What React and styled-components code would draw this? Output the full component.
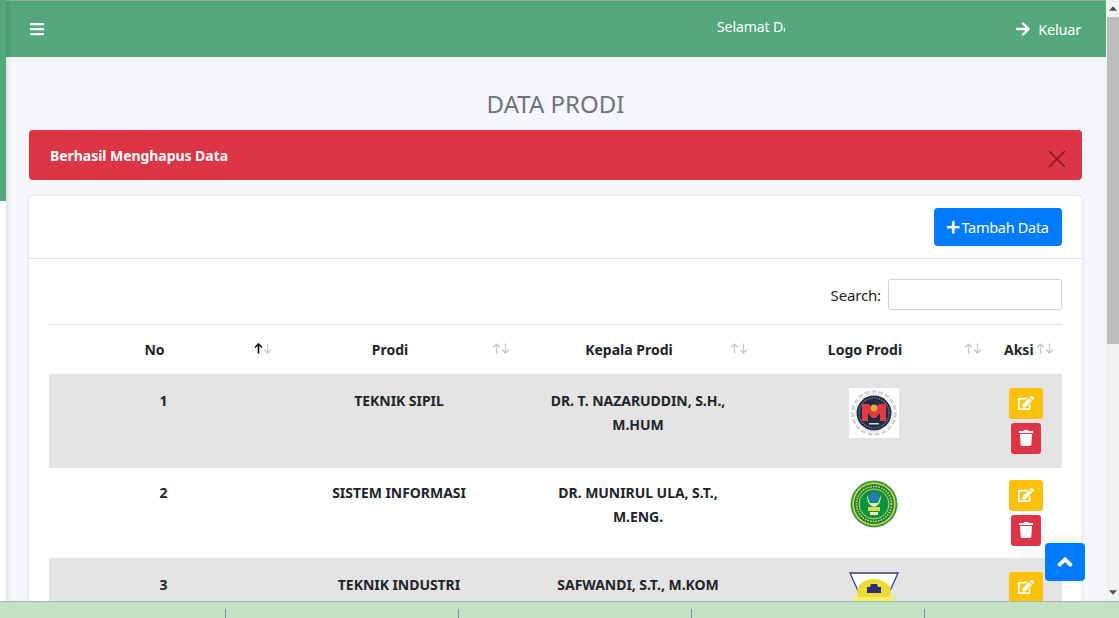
import React from "react";
import styled, { createGlobalStyle } from "styled-components";
import { FaBars, FaArrowRight, FaPlus, FaEdit, FaTrash, FaAngleUp } from "react-icons/fa";

const GlobalStyle = createGlobalStyle`
    html, body {
        margin: 0;
        height: 100%;
        overflow: hidden;
    }
    body {
        font-family: "Noto Sans", "Lato", sans-serif;
        color: #212529;
        background: #fff;
    }
    * {
        box-sizing: border-box;
    }
`;

function LogoTeknikSipil() {
    return (
        <svg width="50" height="50" viewBox="0 0 50 50">
            <rect width="50" height="50" fill="#fff" />
            <circle cx="25" cy="25" r="21.5" fill="none" stroke="#d2d3d6" strokeWidth="2.5" strokeDasharray="5 2" />
            <circle cx="25" cy="25" r="19" fill="#fff" stroke="#c9cacd" strokeWidth="0.6" />
            <circle cx="25" cy="25" r="17.5" fill="#1f2a44" />
            <circle cx="25" cy="25" r="15" fill="none" stroke="#6d7486" strokeWidth="1.5" strokeDasharray="1.5 1" />
            <path d="M13 16h7l5 7 5-7h7v17h-6V25l-4 5h-4l-4-5v8h-6z" fill="#e0393f" />
            <circle cx="25" cy="20" r="3.4" fill="#d9ac3c" />
            <rect x="20" y="35" width="10" height="1.5" fill="#d9dbe2" />
        </svg>
    );
}

function LogoSistemInformasi() {
    return (
        <svg width="50" height="50" viewBox="0 0 50 50">
            <circle cx="25" cy="24" r="23.5" fill="#3e9a45" />
            <circle cx="25" cy="24" r="21.5" fill="#d9d935" />
            <circle cx="25" cy="24" r="20" fill="#1a7f3c" />
            <circle cx="25" cy="24" r="17.5" fill="none" stroke="#cfe08a" strokeWidth="1.6" strokeDasharray="1.5 1.2" />
            <circle cx="25" cy="24" r="15" fill="#0a9440" stroke="#d8e04a" strokeWidth="1" />
            <circle cx="25" cy="17" r="5" fill="#2d76bd" />
            <path d="M18 15c0 8 3 11 7 12 4-1 7-4 7-12l-3 8h-8z" fill="#d9ecd0" />
            <rect x="19" y="27" width="12" height="4" fill="#e2d84a" />
            <rect x="21" y="32" width="8" height="3" fill="#e8eccb" />
        </svg>
    );
}

function LogoTeknikIndustri() {
    return (
        <svg width="50" height="50" viewBox="0 0 50 50">
            <path d="M1 1h48L36 30H14z" fill="#fff" stroke="#3d3a85" strokeWidth="1.3" />
            <ellipse cx="25" cy="20" rx="17" ry="13" fill="#ecdc35" />
            <path d="M18 15h3l1-3h6l1 3h3v6H18z" fill="#2d2a78" />
            <rect x="4" y="25" width="42" height="8" fill="#f5f06a" />
        </svg>
    );
}

const rows = [
    { no: 1, prodi: "TEKNIK SIPIL", kepala: "DR. T. NAZARUDDIN, S.H., M.HUM", logo: <LogoTeknikSipil /> },
    { no: 2, prodi: "SISTEM INFORMASI", kepala: "DR. MUNIRUL ULA, S.T., M.ENG.", logo: <LogoSistemInformasi /> },
    { no: 3, prodi: "TEKNIK INDUSTRI", kepala: "SAFWANDI, S.T., M.KOM", logo: <LogoTeknikIndustri /> },
];

const columns = [
    { label: "No", sortRight: 6, active: true },
    { label: "Prodi", sortRight: 10 },
    { label: "Kepala Prodi", sortRight: 8 },
    { label: "Logo Prodi", sortRight: 10 },
    { label: "Aksi", sortRight: 8 },
];

function SortIcons({ active, right }) {
    return (
        <SortWrap $right={right}>
            <SortArrow viewBox="0 0 9 11" $on={active}><path d="M4.5 10.5V1M1 4.5l3.5-3.5L8 4.5" /></SortArrow>
            <SortArrow viewBox="0 0 9 11"><path d="M4.5.5V10M1 6.500l3.500 3.500L8 6.500" /></SortArrow>
        </SortWrap>
    );
}

export default function App() {
    return (
        <>
            <GlobalStyle />
            <Page>
                <SideStrip />
                <Main>
                    <Header>
                        <MenuButton><FaBars /></MenuButton>
                        <Marquee><MarqueeText>Selamat Datang</MarqueeText></Marquee>
                        <Logout><FaArrowRight />Keluar</Logout>
                    </Header>
                    <Content>
                        <Title>DATA PRODI</Title>
                        <Alert>
                            <strong>Berhasil Menghapus Data</strong>
                            <CloseIcon viewBox="0 0 18 18">
                                <path d="M1 1l16 16M17 1L1 17" />
                            </CloseIcon>
                        </Alert>
                        <Card>
                            <CardHeader>
                                <AddButton><FaPlus />Tambah Data</AddButton>
                            </CardHeader>
                            <CardBody>
                                <SearchRow>
                                    <label htmlFor="cari">Search:</label>
                                    <SearchInput id="cari" type="search" />
                                </SearchRow>
                                <Table>
                                    <colgroup>
                                        <col style={{ width: 229 }} />
                                        <col style={{ width: 242 }} />
                                        <col style={{ width: 236 }} />
                                        <col style={{ width: 236 }} />
                                        <col style={{ width: 70 }} />
                                    </colgroup>
                                    <thead>
                                        <tr>
                                            {columns.map((c) => (
                                                <Th key={c.label}>
                                                    {c.label}
                                                    <SortIcons active={c.active} right={c.sortRight} />
                                                </Th>
                                            ))}
                                        </tr>
                                    </thead>
                                    <tbody>
                                        {rows.map((r) => (
                                            <Row key={r.no} $striped={r.no % 2 === 1}>
                                                <Td>{r.no}</Td>
                                                <Td>{r.prodi}</Td>
                                                <Td>{r.kepala}</Td>
                                                <LogoCell><LogoBox>{r.logo}</LogoBox></LogoCell>
                                                <ActionCell>
                                                    <EditButton><FaEdit /></EditButton>
                                                    <DeleteButton><FaTrash /></DeleteButton>
                                                </ActionCell>
                                            </Row>
                                        ))}
                                    </tbody>
                                </Table>
                            </CardBody>
                        </Card>
                    </Content>
                    <BackToTop><FaAngleUp /></BackToTop>
                </Main>
                <Scrollbar>
                    <ScrollArrow viewBox="0 0 9 5"><path d="M4.5 0L9 5H0z" /></ScrollArrow>
                    <ScrollThumb />
                    <ScrollSpacer />
                    <ScrollArrow viewBox="0 0 9 5"><path d="M0 0h9L4.5 5z" /></ScrollArrow>
                </Scrollbar>
                <BottomBar>
                    <BottomCell $width={226} />
                    <BottomCell $width={233} />
                    <BottomCell $width={233} />
                    <BottomCell $width={233} />
                    <BottomCell $width={194} />
                </BottomBar>
            </Page>
        </>
    );
}

const Page = styled.div`
    position: relative;
    display: grid;
    grid-template-columns: 6px 1fr 13px;
    height: 100vh;
    overflow: hidden;
    background: #fff;
`;

const SideStrip = styled.div`
    height: 201px;
    background: #55a77d;
`;

const Main = styled.main`
    position: relative;
    min-width: 0;
    background: #f4f6f9;
    box-shadow: inset 5px 0 5px -3px rgba(0, 0, 0, 0.1);
    overflow: hidden;
`;

const Header = styled.header`
    display: grid;
    grid-template-columns: 687px 68px 1fr;
    align-items: center;
    height: 57px;
    padding: 0 25px 0 24px;
    background: #55a77d;
    border-top: 1px solid #8aad98;
    color: #fff;
    box-shadow: inset 5px 0 5px -3px rgba(0, 0, 0, 0.12);
`;

const MenuButton = styled.div`
    display: flex;
    font-size: 16px;
    margin-left: -1px;
`;

const Marquee = styled.div`
    overflow: hidden;
    margin-bottom: 6px;
    font-size: 14px;
    letter-spacing: -0.1px;
    white-space: nowrap;
`;

const MarqueeText = styled.span`
    display: inline-block;
`;

const Logout = styled.div`
    display: flex;
    justify-content: flex-end;
    align-items: center;
    gap: 7px;
    font-size: 14.5px;
    letter-spacing: -0.2px;
    svg {
        font-size: 16px;
    }
`;

const Content = styled.div`
    padding: 0 24px 0 23px;
`;

const Title = styled.h1`
    margin: 0;
    padding-top: 31px;
    height: 73px;
    font-size: 24px;
    line-height: 32px;
    font-weight: 400;
    text-align: center;
    color: #6c757d;
`;

const Alert = styled.div`
    position: relative;
    height: 50px;
    padding: 15px 21px 0;
    margin-bottom: 16px;
    background: #dc3545;
    border-radius: 4px;
    color: #fff;
    font-size: 14px;
    letter-spacing: -0.05px;
    line-height: 21px;
`;

const CloseIcon = styled.svg`
    position: absolute;
    top: 20px;
    right: 16px;
    width: 18px;
    height: 18px;
    fill: none;
    stroke: #7d1a25;
    stroke-width: 1.7;
`;

const Card = styled.section`
    background: #fff;
    border-radius: 4px;
    box-shadow: 0 0 1px rgba(0, 0, 0, 0.3), 0 1px 3px rgba(0, 0, 0, 0.1);
`;

const CardHeader = styled.div`
    display: flex;
    justify-content: flex-end;
    height: 63px;
    padding: 12px 20px 0;
    border-bottom: 1px solid #dee2e6;
`;

const AddButton = styled.button`
    display: flex;
    align-items: center;
    gap: 1px;
    width: 128px;
    height: 38px;
    padding: 0 12px;
    background: #007bff;
    border: none;
    border-radius: 4px;
    color: #fff;
    font-family: inherit;
    font-size: 14.5px;
    letter-spacing: -0.3px;
    white-space: nowrap;
`;

const CardBody = styled.div`
    padding: 20px 20px 0;
`;

const SearchRow = styled.div`
    display: flex;
    justify-content: flex-end;
    align-items: center;
    gap: 7px;
    height: 31px;
    margin-bottom: 14px;
    font-size: 15px;
    letter-spacing: -0.15px;
`;

const SearchInput = styled.input`
    width: 174px;
    height: 31px;
    padding: 0 8px;
    border: 1px solid #ced4da;
    border-radius: 3px;
    background: #fff;
    appearance: none;
`;

const Table = styled.table`
    width: 1013px;
    table-layout: fixed;
    border-collapse: collapse;
    font-size: 14px;
    letter-spacing: -0.05px;
    line-height: 24px;
    font-weight: 700;
    text-align: center;
`;

const Th = styled.th`
    position: relative;
    height: 49px;
    padding: 2px 30px 0 12px;
    border-top: 1px solid #dee2e6;
    font-weight: 700;
    letter-spacing: 0;
`;

const SortWrap = styled.span`
    position: absolute;
    top: 18px;
    right: ${(p) => p.$right}px;
    display: flex;
`;

const SortArrow = styled.svg`
    width: 9px;
    height: 11px;
    fill: none;
    stroke: ${(p) => (p.$on ? "#111" : "#c4c4c4")};
    stroke-width: ${(p) => (p.$on ? 1.6 : 1.2)};
`;

const Row = styled.tr`
    --pad: ${(p) => (p.$striped ? "14px" : "12px")};
    background: ${(p) => (p.$striped ? "#e4e4e4" : "#fff")};
`;

const Td = styled.td`
    padding: calc(var(--pad) + 1px) 12px var(--pad);
    vertical-align: top;
`;

const LogoCell = styled(Td)`
    padding-top: var(--pad);
`;

const LogoBox = styled.div`
    display: flex;
    justify-content: center;
    height: 50px;
`;

const ActionCell = styled(Td)`
    padding: var(--pad) 0;
`;

const EditButton = styled.button`
    display: flex;
    align-items: center;
    justify-content: center;
    width: 34px;
    height: 31px;
    margin: 0 0 4px 17px;
    background: #ffc107;
    border: none;
    border-radius: 3px;
    color: #fff;
    font-size: 16px;
`;

const DeleteButton = styled(EditButton)`
    width: 30px;
    margin: 0 0 0 19px;
    background: #dc3545;
`;

const BackToTop = styled.div`
    position: absolute;
    right: 21px;
    top: 543px;
    display: flex;
    align-items: center;
    justify-content: center;
    width: 40px;
    height: 38px;
    background: #007bff;
    border-radius: 4px;
    color: #fff;
    font-size: 24px;
`;

const Scrollbar = styled.div`
    display: flex;
    flex-direction: column;
    align-items: center;
    height: 601px;
    background: #f1f1f1;
`;

const ScrollArrow = styled.svg`
    flex: none;
    width: 8px;
    height: 5px;
    margin: 6px 0;
    fill: #505050;
`;

const ScrollThumb = styled.div`
    width: 100%;
    height: 327px;
    margin-left: 1px;
    background: #bdbdbd;
`;

const ScrollSpacer = styled.div`
    flex: 1;
`;

const BottomBar = styled.footer`
    position: absolute;
    left: 0;
    right: 0;
    bottom: 0;
    display: flex;
    height: 17px;
    padding-top: 7px;
    background: #c5e1c5;
    border-top: 1px solid #9dbb9f;
`;

const BottomCell = styled.div`
    width: ${(p) => p.$width}px;
    border-right: 1px solid #7d8f80;
    &:last-child {
        border-right: none;
    }
`;
